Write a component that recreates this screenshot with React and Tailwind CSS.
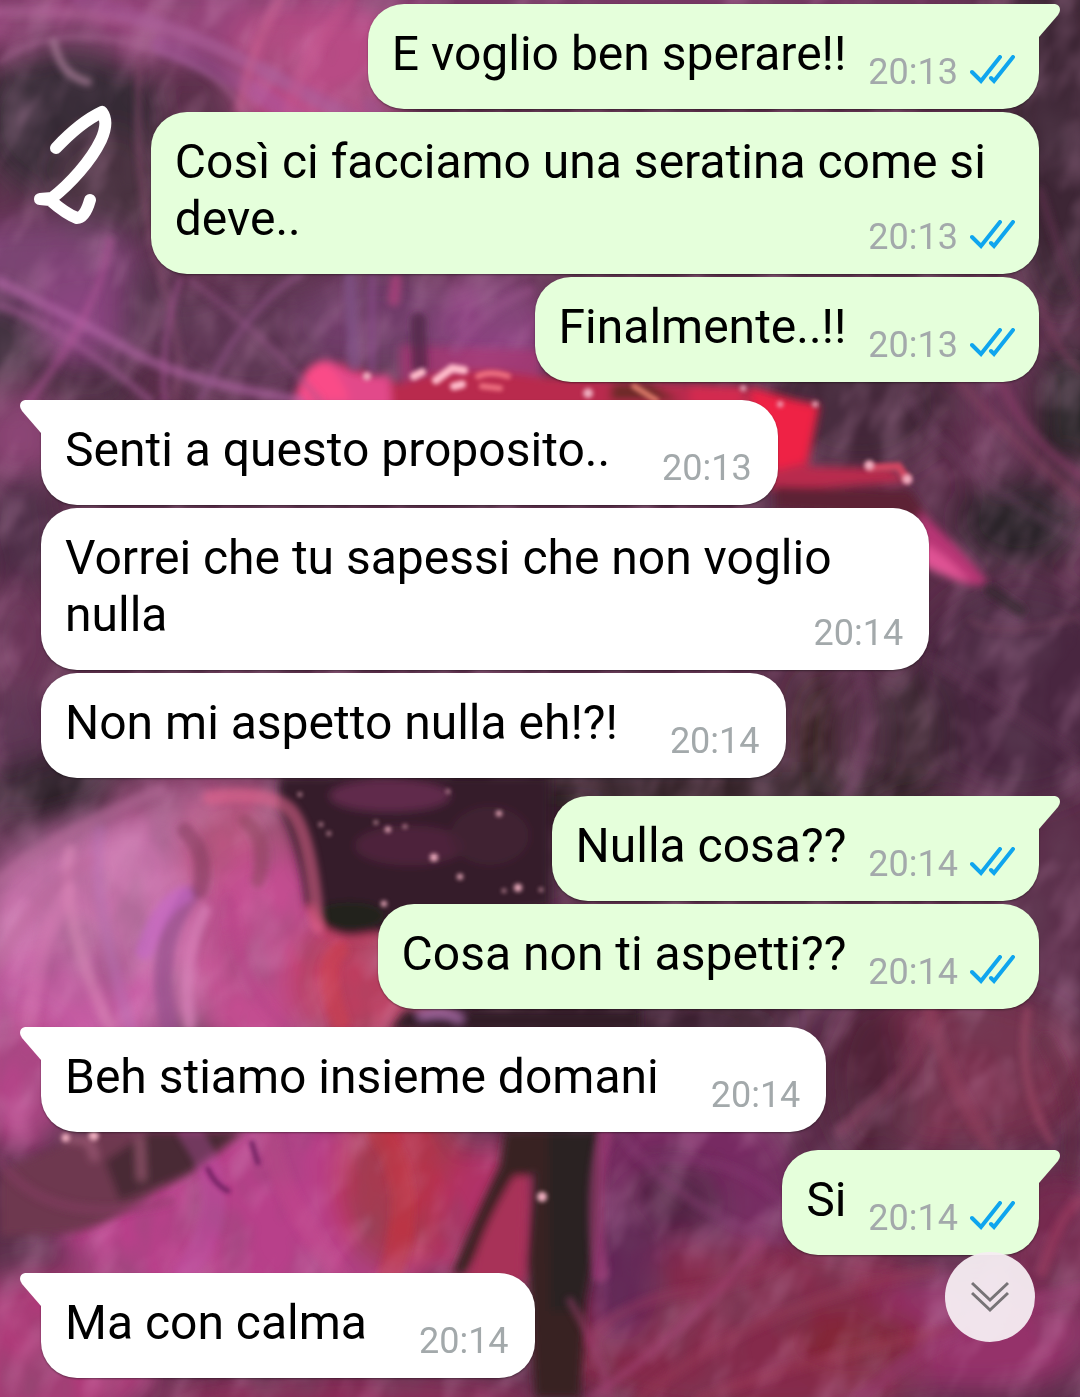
const messages = [
  { id: 1, text: 'E voglio ben sperare!!', time: '20:13', mine: true, tail: true },
  { id: 2, text: 'Così ci facciamo una seratina come si deve..', time: '20:13', mine: true },
  { id: 3, text: 'Finalmente..!!', time: '20:13', mine: true },
  { id: 4, text: 'Senti a questo proposito..', time: '20:13', tail: true },
  { id: 5, text: 'Vorrei che tu sapessi che non voglio nulla', time: '20:14' },
  { id: 6, text: 'Non mi aspetto nulla eh!?!', time: '20:14' },
  { id: 7, text: 'Nulla cosa??', time: '20:14', mine: true, tail: true },
  { id: 8, text: 'Cosa non ti aspetti??', time: '20:14', mine: true },
  { id: 9, text: 'Beh stiamo insieme domani', time: '20:14', tail: true },
  { id: 10, text: 'Si', time: '20:14', mine: true, tail: true },
  { id: 11, text: 'Ma con calma', time: '20:14', tail: true },
];

// Large soft colour areas: [cx, cy, rx, ry, colour]
const washes = [
  [180, 20, 260, 40, '#95457a'],
  [320, 70, 90, 90, '#b84c85'],
  [70, 120, 90, 80, '#352a36'],
  [110, 190, 60, 60, '#48303f'],
  [30, 260, 110, 40, '#7d4375'],
  [90, 320, 70, 40, '#8a4580'],
  [0, 340, 45, 45, '#43303f'],
  [150, 310, 30, 50, '#53304c'],
  [250, 340, 90, 60, '#5d3652'],
  [90, 385, 50, 30, '#4a2b40'],
  [380, 320, 80, 50, '#713c6b'],
  [490, 330, 60, 60, '#8c4280'],
  [600, 0, 380, 12, '#8a4076'],
  [1060, 120, 60, 200, '#3e2635'],
  [20, 440, 40, 50, '#8b4474'],
  [20, 530, 40, 60, '#4c2b44'],
  [20, 640, 40, 60, '#6a3558'],
  [20, 740, 40, 50, '#5d3052'],
  [860, 400, 90, 70, '#432739'],
  [1000, 410, 35, 80, '#693557'],
  [1070, 410, 40, 60, '#242124'],
  [1060, 490, 30, 30, '#5c2c48'],
  [1020, 520, 60, 45, '#282426'],
  [1020, 690, 110, 110, '#492840'],
  [910, 730, 40, 60, '#352229'],
  [860, 740, 20, 80, '#593048'],
  [815, 740, 20, 70, '#32211f'],
  [60, 800, 80, 50, '#2d222c'],
  [200, 810, 90, 40, '#a0507f'],
  [10, 870, 40, 50, '#5f3050'],
  [120, 930, 140, 110, '#c772aa'],
  [70, 1010, 100, 60, '#c75ba4'],
  [240, 850, 60, 60, '#ba5480'],
  [270, 960, 80, 110, '#c34e90'],
  [360, 980, 70, 70, '#c03c5e'],
  [470, 830, 130, 70, '#3a1f2d'],
  [700, 790, 250, 20, '#2c2022'],
  [620, 1020, 180, 20, '#311b25'],
  [960, 1070, 130, 80, '#772d4b'],
  [870, 1080, 40, 80, '#512439'],
  [20, 1080, 50, 70, '#b34588'],
  [260, 1220, 200, 110, '#b8408a'],
  [400, 1180, 65, 90, '#b83048'],
  [490, 1220, 50, 80, '#b13268'],
  [690, 1200, 110, 110, '#772c62'],
  [670, 1200, 50, 40, '#512343'],
  [760, 1330, 230, 90, '#85294c'],
  [620, 1270, 40, 70, '#642557'],
  [980, 1330, 120, 60, '#95336a'],
  [1060, 1240, 60, 70, '#762c50'],
  [860, 1340, 70, 30, '#842734'],
  [50, 1350, 110, 80, '#ae3b79'],
  [350, 1400, 200, 25, '#8e2a58'],
];

// Fine filaments: [path, colour, width, opacity]
const strands = [
  ['M0 62 Q55 20 150 48 T260 150', '#aa6996', 5, 0.5],
  ['M0 12 Q130 8 210 44 T360 130', '#b66a9d', 12, 0.4],
  ['M54 42 C60 66 68 76 88 82', '#aa7e99', 8, 0.7],
  ['M80 0 Q180 25 300 90 T370 106', '#a45a9c', 16, 0.4],
  ['M160 45 Q250 80 310 130', '#a75ba6', 18, 0.4],
  ['M140 60 Q132 180 160 270 T175 400', '#8b4e72', 6, 0.5],
  ['M0 282 Q80 320 130 350 T300 400', '#b466a7', 10, 0.55],
  ['M0 305 Q70 330 150 400', '#a65b98', 8, 0.5],
  ['M30 400 Q100 310 110 240', '#b45598', 8, 0.45],
  ['M180 280 Q160 340 165 400', '#a55694', 7, 0.5],
  ['M200 400 Q250 300 300 275', '#94588b', 8, 0.5],
  ['M190 280 Q260 330 320 400', '#9a588c', 6, 0.4],
  ['M350 276 L354 365', '#81528b', 12, 0.6],
  ['M372 276 L372 370', '#8d4f91', 6, 0.6],
  ['M396 280 L394 300', '#b0447e', 12, 0.7],
  ['M418 320 L420 365', '#4c2342', 16, 0.7],
  ['M455 350 Q480 310 530 290', '#a05791', 10, 0.4],
  ['M280 0 Q250 50 240 110', '#cc6492', 10, 0.4],
  ['M350 0 Q300 60 290 110', '#c85a90', 14, 0.4],
  ['M960 382 Q1000 430 1080 500', '#8b4265', 12, 0.35],
  ['M910 400 Q950 470 1080 540', '#754367', 10, 0.25],
  ['M1000 380 Q1025 440 1080 475', '#8b3e68', 10, 0.5],
  ['M1040 190 Q1060 260 1080 300', '#6c3555', 7, 0.5],
  ['M1040 300 Q1054 350 1080 370', '#844263', 6, 0.5],
  ['M970 620 Q1000 640 1080 615', '#7c4360', 6, 0.4],
  ['M990 590 L1020 610', '#34282e', 12, 0.7],
  ['M930 660 Q1000 700 1080 760', '#633857', 12, 0.3],
  ['M860 670 Q880 740 845 796', '#704064', 12, 0.4],
  ['M0 880 Q60 830 160 790', '#b66b99', 12, 0.5],
  ['M70 850 Q60 920 110 1025', '#e090bc', 12, 0.4],
  ['M100 830 Q90 890 130 1025', '#b773b5', 12, 0.4],
  ['M0 960 Q30 900 90 860', '#bd689d', 12, 0.5],
  ['M30 1020 Q40 930 70 890', '#df83ba', 16, 0.35],
  ['M190 895 Q150 950 170 1025', '#96508b', 18, 0.7],
  ['M205 910 Q180 960 190 1025', '#dc85bc', 12, 0.6],
  ['M145 950 Q160 905 184 894', '#c667ca', 18, 0.6],
  ['M230 900 Q235 980 285 1025', '#b84488', 10, 0.6],
  ['M185 830 Q210 855 200 890', '#80395d', 16, 0.55],
  ['M245 820 Q270 840 258 880', '#914461', 14, 0.6],
  ['M210 797 Q260 790 285 805 T318 925', '#e56790', 14, 0.55],
  ['M340 1020 Q320 960 340 950', '#d1434a', 18, 0.45],
  ['M0 1160 Q50 1230 170 1200', '#8a3d67', 10, 0.4],
  ['M190 1132 Q240 1200 185 1273', '#bf57ac', 24, 0.35],
  ['M270 1132 Q280 1200 340 1273', '#c6488c', 20, 0.35],
  ['M380 1132 Q420 1190 390 1273', '#c5363e', 24, 0.4],
  ['M605 1132 Q590 1190 600 1273', '#b43f86', 16, 0.5],
  ['M590 1397 Q690 1330 760 1240', '#a44375', 9, 0.5],
  ['M590 1340 Q620 1300 690 1290 T780 1260', '#95345f', 12, 0.4],
  ['M620 1132 Q680 1210 780 1240', '#853d73', 10, 0.4],
  ['M650 1160 Q730 1150 780 1200', '#843770', 9, 0.4],
  ['M570 1300 Q600 1350 610 1397', '#9b3e6d', 8, 0.5],
  ['M640 1397 Q760 1300 930 1270', '#9b3d5b', 12, 0.35],
  ['M700 1397 Q830 1350 950 1330', '#a13b5d', 12, 0.35],
  ['M860 1397 Q960 1310 1080 1290', '#9b3a70', 16, 0.4],
  ['M840 1130 Q930 1060 930 1010', '#914467', 12, 0.35],
  ['M930 1010 Q950 1090 990 1145', '#944060', 14, 0.45],
  ['M1027 1010 Q1015 1080 1050 1140', '#a64b69', 8, 0.5],
  ['M1045 1040 Q1080 1100 1070 1170', '#622742', 16, 0.5],
  ['M1042 1270 Q1060 1210 1080 1200', '#a33e64', 12, 0.5],
];

// Glitter: [x, y, radius]
const sparks = [
  [300, 794, 2], [321, 824, 2], [376, 822, 2], [388, 829, 3], [405, 826, 2], [434, 857, 4],
  [460, 876, 3], [499, 813, 3], [518, 887, 4], [384, 903, 3], [329, 833, 2], [504, 890, 2],
  [541, 889, 2], [471, 909, 2], [448, 791, 2], [542, 1196, 5], [94, 1135, 5], [66, 1137, 4],
  [780, 404, 3], [815, 404, 3], [869, 465, 5], [907, 479, 5], [367, 376, 4], [743, 388, 3],
  [588, 393, 5],
];

function Wallpaper() {
  return (
    <svg
      className="absolute inset-0 h-full w-full"
      viewBox="0 0 1080 1397"
      preserveAspectRatio="xMidYMid slice"
      aria-hidden="true"
    >
      <defs>
        <filter id="soft" x="-20%" y="-20%" width="140%" height="140%">
          <feGaussianBlur stdDeviation="15" />
        </filter>
        <filter id="mid" x="-20%" y="-20%" width="140%" height="140%">
          <feGaussianBlur stdDeviation="4" />
        </filter>
        <filter id="fine" x="-20%" y="-20%" width="140%" height="140%">
          <feGaussianBlur stdDeviation="3" />
        </filter>
        <filter id="spark" x="-20%" y="-20%" width="140%" height="140%">
          <feGaussianBlur stdDeviation="2" />
        </filter>
        <filter id="grain" x="0" y="0" width="100%" height="100%">
          <feTurbulence type="fractalNoise" baseFrequency="0.02 0.012" numOctaves="3" seed="8" />
          <feColorMatrix values="0 0 0 0 0.16  0 0 0 0 0.09  0 0 0 0 0.14  1.8 0 0 0 -0.7" />
          <feGaussianBlur stdDeviation="2" />
        </filter>
        <filter id="glow" x="0" y="0" width="100%" height="100%">
          <feTurbulence type="fractalNoise" baseFrequency="0.03 0.015" numOctaves="3" seed="21" />
          <feColorMatrix values="0 0 0 0 0.8  0 0 0 0 0.4  0 0 0 0 0.65  0 1.8 0 0 -0.8" />
          <feGaussianBlur stdDeviation="2" />
        </filter>
      </defs>
      <rect width="1080" height="1397" fill="#5b2e4a" />
      <g filter="url(#soft)">
        {washes.map(([cx, cy, rx, ry, fill]) => (
          <ellipse key={`${cx}-${cy}`} cx={cx} cy={cy} rx={rx} ry={ry} fill={fill} />
        ))}
      </g>
      <rect width="1080" height="1397" filter="url(#grain)" opacity="0.4" />
      <g transform="rotate(28 540 700)">
        <rect x="-400" y="-400" width="1900" height="2200" filter="url(#glow)" opacity="0.35" />
      </g>

      {/* Flowers and stems */}
      <g filter="url(#mid)">
        <path d="M400 345 L540 350 L540 385 L400 390Z" fill="#a83a74" opacity="0.8" />
        <path d="M292 410 Q300 355 345 364 L400 384 Q450 362 535 376 L700 384 L820 404 L808 466 L890 468 L908 482 L770 490 L760 410Z" fill="#b92a4d" />
        <path d="M294 410 Q300 358 330 360 Q360 380 390 374 L392 410Z" fill="#e24a8a" />
        <path d="M296 400 Q302 360 326 362 Q340 372 350 400Z" fill="#fa4c88" />
        <path d="M612 384 L650 384 L680 400 L610 400Z" fill="#6b2928" />
        <path d="M690 384 L745 386 L740 410 L690 410Z" fill="#d32a50" />
        <path d="M748 386 L819 406 L806 462 L775 470Z" fill="#ef2045" />
        <path d="M775 486 L910 490 L930 520 L775 508Z" fill="#5d2034" />
        <path d="M918 510 Q958 545 988 582 Q966 592 926 562Z" fill="#b83674" />
        <path d="M918 540 Q946 552 970 582 Q950 580 918 562Z" fill="#e05294" />
        <path d="M280 776 L550 776 L550 905 L352 936 Q320 932 306 905 Q300 840 278 805Z" fill="#351e29" />
        <ellipse cx="390" cy="795" rx="60" ry="16" fill="#6d2d55" opacity="0.8" />
        <ellipse cx="410" cy="845" rx="55" ry="20" fill="#54263f" opacity="0.8" />
        <ellipse cx="490" cy="835" rx="40" ry="30" fill="#442036" opacity="0.8" />
        <ellipse cx="350" cy="915" rx="35" ry="14" fill="#24211f" />
        <path d="M310 905 Q318 938 352 938 L378 935" stroke="#c44268" strokeWidth="5" fill="none" />
        <path d="M405 1010 L640 1010 L640 1030 L390 1030Z" fill="#321a28" />
        <path d="M418 1015 Q450 1008 462 1020" stroke="#a66ba5" strokeWidth="8" fill="none" />
        <path d="M0 1170 L95 1130 L245 1130 Q195 1175 158 1190 Q100 1230 70 1232 L0 1236Z" fill="#6e3850" />
        <path d="M150 1130 L240 1130 L190 1172 L120 1200 L105 1160Z" fill="#4a2a36" />
        <path d="M62 1136 L90 1140 L96 1160 M140 1136 L142 1180" stroke="#a7627c" strokeWidth="8" fill="none" opacity="0.7" />
        <path d="M505 1130 L598 1130 Q602 1220 586 1300 L580 1397 L535 1397 L528 1260 L534 1170 Q500 1205 466 1273 L452 1273 Q482 1200 500 1165Z" fill="#382022" />
        <path d="M514 1175 L528 1175 L524 1280 L468 1280 Q480 1230 514 1175Z" fill="#a83058" />
        <path d="M548 1130 L595 1130 Q598 1220 582 1310 L550 1310Z" fill="#292321" />
      </g>
      <g filter="url(#fine)" fill="none" strokeLinecap="round">
        {strands.map(([d, stroke, width, opacity]) => (
          <path key={d} d={d} stroke={stroke} strokeWidth={width} opacity={opacity} />
        ))}
      </g>
      <g filter="url(#spark)" fill="none" strokeLinecap="round">
        <path d="M208 1168 Q215 1184 228 1190 M252 1142 L258 1162" stroke="#742064" strokeWidth="5" />
        <path d="M414 376 L422 372 M436 380 L452 368 L464 370 M454 386 L462 384" stroke="#ffbccb" strokeWidth="8" />
        <path d="M478 376 Q490 370 508 376 M482 386 L500 388" stroke="#ee7080" strokeWidth="6" />
        <path d="M870 468 L898 466 L906 478" stroke="#d04662" strokeWidth="8" />
        <path d="M634 386 L656 400" stroke="#d97868" strokeWidth="6" />
      </g>
      <g filter="url(#spark)" fill="#efafc0">
        {sparks.map(([cx, cy, r]) => (
          <circle key={`${cx}-${cy}`} cx={cx} cy={cy} r={r} />
        ))}
      </g>
    </svg>
  );
}

function Ticks() {
  return (
    <svg
      width="45"
      height="30"
      viewBox="0 0 45 30"
      fill="none"
      stroke="#0fa5ee"
      strokeWidth="4"
      strokeLinecap="round"
      role="img"
      aria-label="Letto"
    >
      <path d="M2 17 L11 26 L30 2" />
      <path d="M21 23 L24 26 L43 2" />
    </svg>
  );
}

function Tail({ mine }) {
  return (
    <svg
      className={`absolute top-0 ${mine ? 'left-full fill-[#e5ffdb]' : 'right-full -scale-x-100 fill-white'}`}
      width="21"
      height="34"
      viewBox="0 0 21 34"
      aria-hidden="true"
    >
      <path d="M0 0 H16 Q21 1 21 6 Q21 8 19 11 L0 33Z" />
    </svg>
  );
}

function Message({ text, time, mine, tail }) {
  const corner = tail ? (mine ? 'rounded-tr-none' : 'rounded-tl-none') : '';
  return (
    <li
      className={`relative flow-root max-w-[89%] rounded-[36px] pt-[21px] pb-4 pl-6 shadow-[0_1px_2px_rgba(0,0,0,0.4)] ${corner} ${
        mine ? 'self-end bg-[#e5ffdb] pr-6' : 'self-start bg-white pr-[26px]'
      } ${tail ? 'mt-[18px] first:mt-0' : 'mt-[3px]'}`}
    >
      {tail && <Tail mine={mine} />}
      <span className="text-[48px] leading-[57px] text-black">{text}</span>
      <span className={`float-right flex h-[68px] items-end ${mine ? 'ml-[22px] gap-3' : 'ml-[52px]'}`}>
        <time className="text-[36px] leading-[42px] text-[#a3a9ab]">{time}</time>
        {mine && (
          <span className="pb-2">
            <Ticks />
          </span>
        )}
      </span>
    </li>
  );
}

export default function App() {
  return (
    <main className="relative min-h-screen overflow-hidden bg-[#5b2e4a] font-[Roboto,sans-serif]">
      <Wallpaper />

      {/* Hand-drawn mark */}
      <svg
        className="absolute top-[104px] left-[32px]"
        width="82"
        height="124"
        viewBox="0 0 82 124"
        fill="none"
        stroke="white"
        strokeWidth="12"
        strokeLinecap="round"
        strokeLinejoin="round"
        role="img"
        aria-label="2"
      >
        <path d="M24 44 C40 27 55 15 70 8 C75 15 74 25 69 36 C59 57 38 80 20 94 L8 95 L18 96 Q34 110 45 114 Q53 114 58 96" />
      </svg>

      <ul className="relative flex flex-col px-[41px] pt-1 pb-5">
        {messages.map((message) => (
          <Message key={message.id} {...message} />
        ))}
      </ul>

      <button
        type="button"
        aria-label="Vai in fondo"
        className="absolute right-[45px] bottom-14 flex size-[90px] items-center justify-center rounded-full bg-[#f6edf2]/95"
      >
        <svg width="38" height="32" viewBox="0 0 38 32" fill="none" stroke="#777376" strokeWidth="3">
          <path d="M1 2 L19 19 L37 2 M1 12 L19 29 L37 12" />
        </svg>
      </button>
    </main>
  );
}
